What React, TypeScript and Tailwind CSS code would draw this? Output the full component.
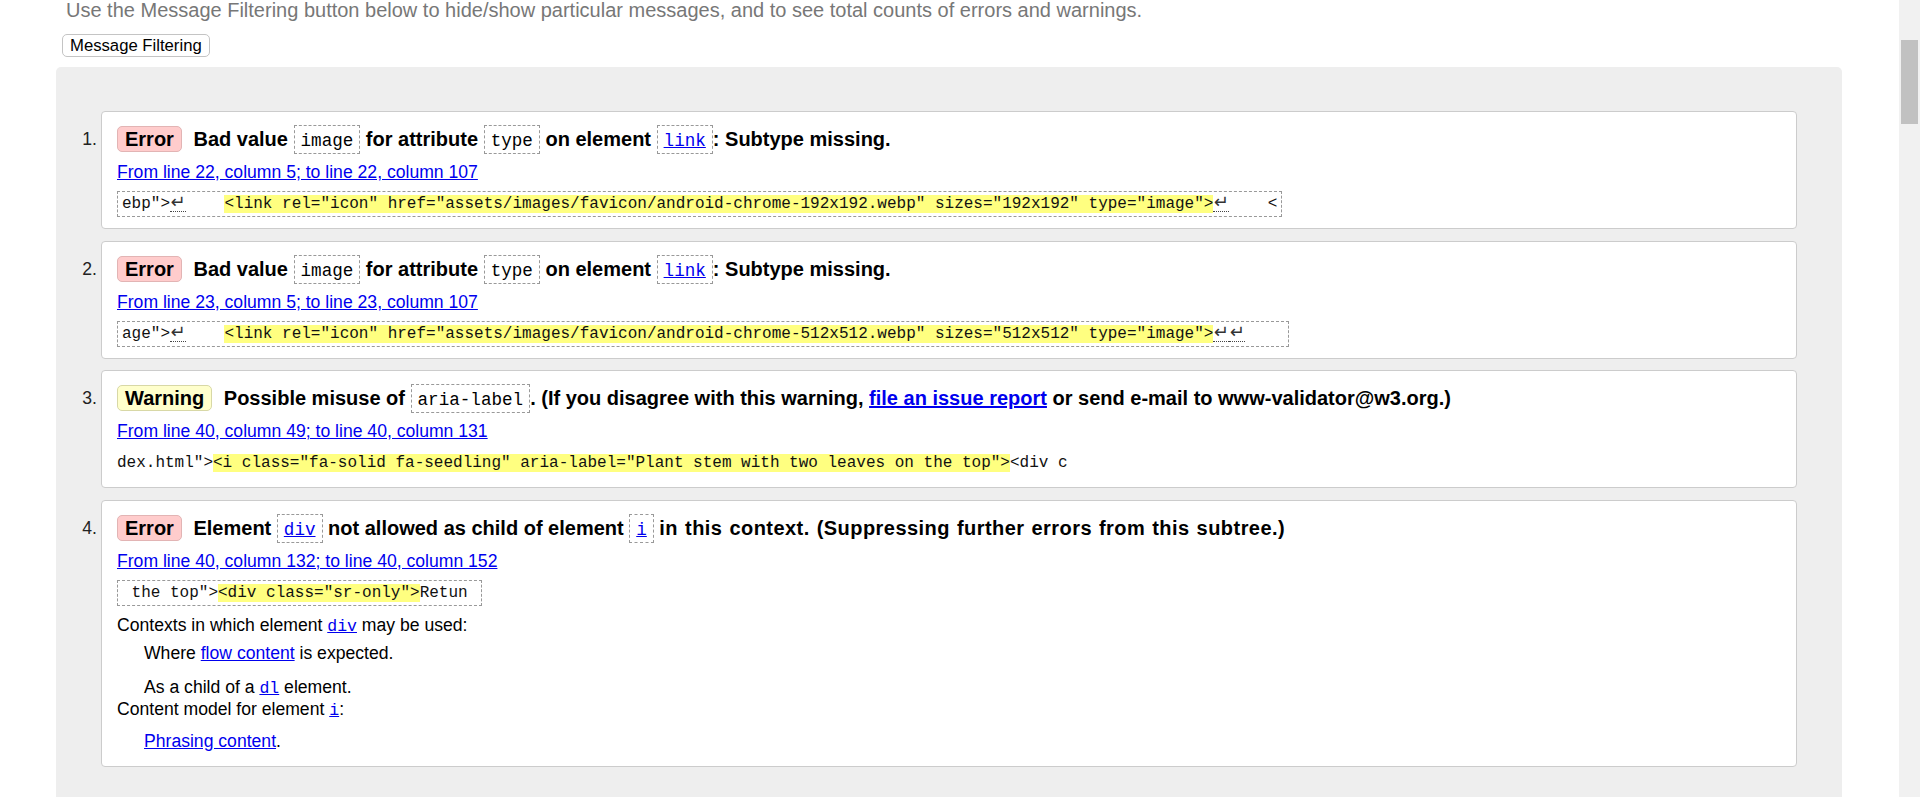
import type { ReactNode } from 'react';

type Kind = 'error' | 'warning';

function Badge({ kind }: { kind: Kind }) {
  return (
    <span
      className={`mr-[6px] inline-block rounded-[5px] border px-[7px] py-[1px] leading-[22.4px] ${
        kind === 'error' ? 'border-[#e2b4b4] bg-[#ffcccc]' : 'border-[#d8d8a6] bg-[#ffffcc]'
      }`}
    >
      {kind === 'error' ? 'Error' : 'Warning'}
    </span>
  );
}

function Code({ children, link }: { children: ReactNode; link?: boolean }) {
  return (
    <code
      className={`inline-block border border-dashed border-[#999999] px-[6px] pb-[1px] pt-[5px] font-['Liberation_Mono',monospace] text-[17.6px] font-normal leading-[21px] ${
        link ? 'text-[#0000ee] underline' : 'text-black'
      }`}
    >
      {children}
    </code>
  );
}

function A({ children, mono }: { children: ReactNode; mono?: boolean }) {
  return (
    <a className={`text-[#0000ee] underline ${mono ? "font-['Liberation_Mono',monospace] text-[16.5px]" : ''}`}>
      {children}
    </a>
  );
}

// the return-arrow marker with its dotted underline
function Br() {
  return (
    <span className="inline-block w-[16px] border-b border-dotted border-[#444444] text-center font-['DejaVu_Sans',sans-serif] text-[18px] leading-[18px] text-[#333333]">
      ↵
    </span>
  );
}

function Hl({ children }: { children: ReactNode }) {
  return <span className="bg-[#ffff80]">{children}</span>;
}

function Extract({ children, boxed = true }: { children: ReactNode; boxed?: boolean }) {
  return (
    <div
      className={`mt-[8px] h-[26px] self-start whitespace-pre font-['Liberation_Mono',monospace] text-[16px] text-[#111111] ${
        boxed ? 'border border-dashed border-[#999999] px-[4px] leading-[24px]' : 'leading-[26px]'
      }`}
    >
      {children}
    </div>
  );
}

function Item({ n, title, range, children }: { n: number; title: ReactNode; range: string; children: ReactNode }) {
  return (
    <li className="flex">
      <div className="w-[45px] shrink-0 pr-[4px] pt-[13px] text-right text-[17.6px] leading-[30px] text-[#222222]">{n}.</div>
      <div className="flex min-w-0 flex-1 flex-col rounded-[4px] border border-[#cccccc] bg-white px-[15px] pb-[11px] pt-[12px]">
        <div className="h-[30px] whitespace-nowrap text-[20px] font-bold leading-[30px] text-black">{title}</div>
        <div className="mt-[8px] text-[17.6px] leading-[21px]">
          <A>{range}</A>
        </div>
        {children}
      </div>
    </li>
  );
}

export default function App() {
  return (
    <div className="flex h-[797px] w-full overflow-hidden bg-white font-['Liberation_Sans',Arial,sans-serif] text-black">
      <div className="min-w-0 flex-1 pl-[56px] pr-[57px]">
        <p className="-mt-px whitespace-nowrap pl-[10px] text-[20px] leading-[23px] text-[#777777]">
          Use the Message Filtering button below to hide/show particular messages, and to see total counts of errors and warnings.
        </p>
        <button className="ml-[6px] mt-[12px] block h-[23px] rounded-[5px] border border-[#c4c4c4] bg-white px-[7px] text-[16.7px] leading-[21px] text-black">
          Message Filtering
        </button>

        <div className="mt-[10px] rounded-t-[5px] bg-[#eeeeee] pb-[60px] pr-[45px] pt-[44px]">
          <ol className="flex flex-col gap-[11.5px]">
            <Item
              n={1}
              range="From line 22, column 5; to line 22, column 107"
              title={
                <>
                  <Badge kind="error" /> Bad value <Code>image</Code> for attribute <Code>type</Code> on element{' '}
                  <Code link>link</Code>: Subtype missing.
                </>
              }
            >
              <Extract>
                ebp"&gt;<Br />
                {'    '}
                <Hl>&lt;link rel="icon" href="assets/images/favicon/android-chrome-192x192.webp" sizes="192x192" type="image"&gt;</Hl>
                <Br />
                {'    '}&lt;
              </Extract>
            </Item>

            <Item
              n={2}
              range="From line 23, column 5; to line 23, column 107"
              title={
                <>
                  <Badge kind="error" /> Bad value <Code>image</Code> for attribute <Code>type</Code> on element{' '}
                  <Code link>link</Code>: Subtype missing.
                </>
              }
            >
              <Extract>
                age"&gt;<Br />
                {'    '}
                <Hl>&lt;link rel="icon" href="assets/images/favicon/android-chrome-512x512.webp" sizes="512x512" type="image"&gt;</Hl>
                <Br />
                <Br />
                {'    '}
              </Extract>
            </Item>

            <Item
              n={3}
              range="From line 40, column 49; to line 40, column 131"
              title={
                <>
                  <Badge kind="warning" /> Possible misuse of <Code>aria-label</Code>. (If you disagree with this warning,{' '}
                  <a className="text-[#0000ee] underline">file an issue report</a> or send e-mail to www-validator@w3.org.)
                </>
              }
            >
              <Extract boxed={false}>
                dex.html"&gt;<Hl>&lt;i class="fa-solid fa-seedling" aria-label="Plant stem with two leaves on the top"&gt;</Hl>&lt;div c
              </Extract>
            </Item>

            <Item
              n={4}
              range="From line 40, column 132; to line 40, column 152"
              title={
                <>
                  <Badge kind="error" /> Element <Code link>div</Code> not allowed as child of element <Code link>i</Code>{' '}
                  <span className="tracking-[0.45px] [word-spacing:1px]">
                    in this context. (Suppressing further errors from this subtree.)
                  </span>
                </>
              }
            >
              <Extract>
                {' the top">'}
                <Hl>&lt;div class="sr-only"&gt;</Hl>Retun{' '}
              </Extract>
              <div className="text-[17.6px] leading-[21px]">
                <div className="mt-[9.5px]">
                  Contexts in which element <A mono>div</A> may be used:
                </div>
                <div className="mt-[6px] pl-[27px]">
                  Where <A>flow content</A> is expected.
                </div>
                <div className="mt-[13px] pl-[27px]">
                  As a child of a <A mono>dl</A> element.
                </div>
                <div>
                  Content model for element <A mono>i</A>:
                </div>
                <div className="mb-[3px] mt-[10px] pl-[27px]">
                  <A>Phrasing content</A>.
                </div>
              </div>
            </Item>
          </ol>
        </div>
      </div>

      <div className="w-[21px] shrink-0 bg-[#f1f1f1]">
        <div className="ml-[2px] mt-[40px] h-[84px] w-[17px] bg-[#c1c1c1]" />
      </div>
    </div>
  );
}
